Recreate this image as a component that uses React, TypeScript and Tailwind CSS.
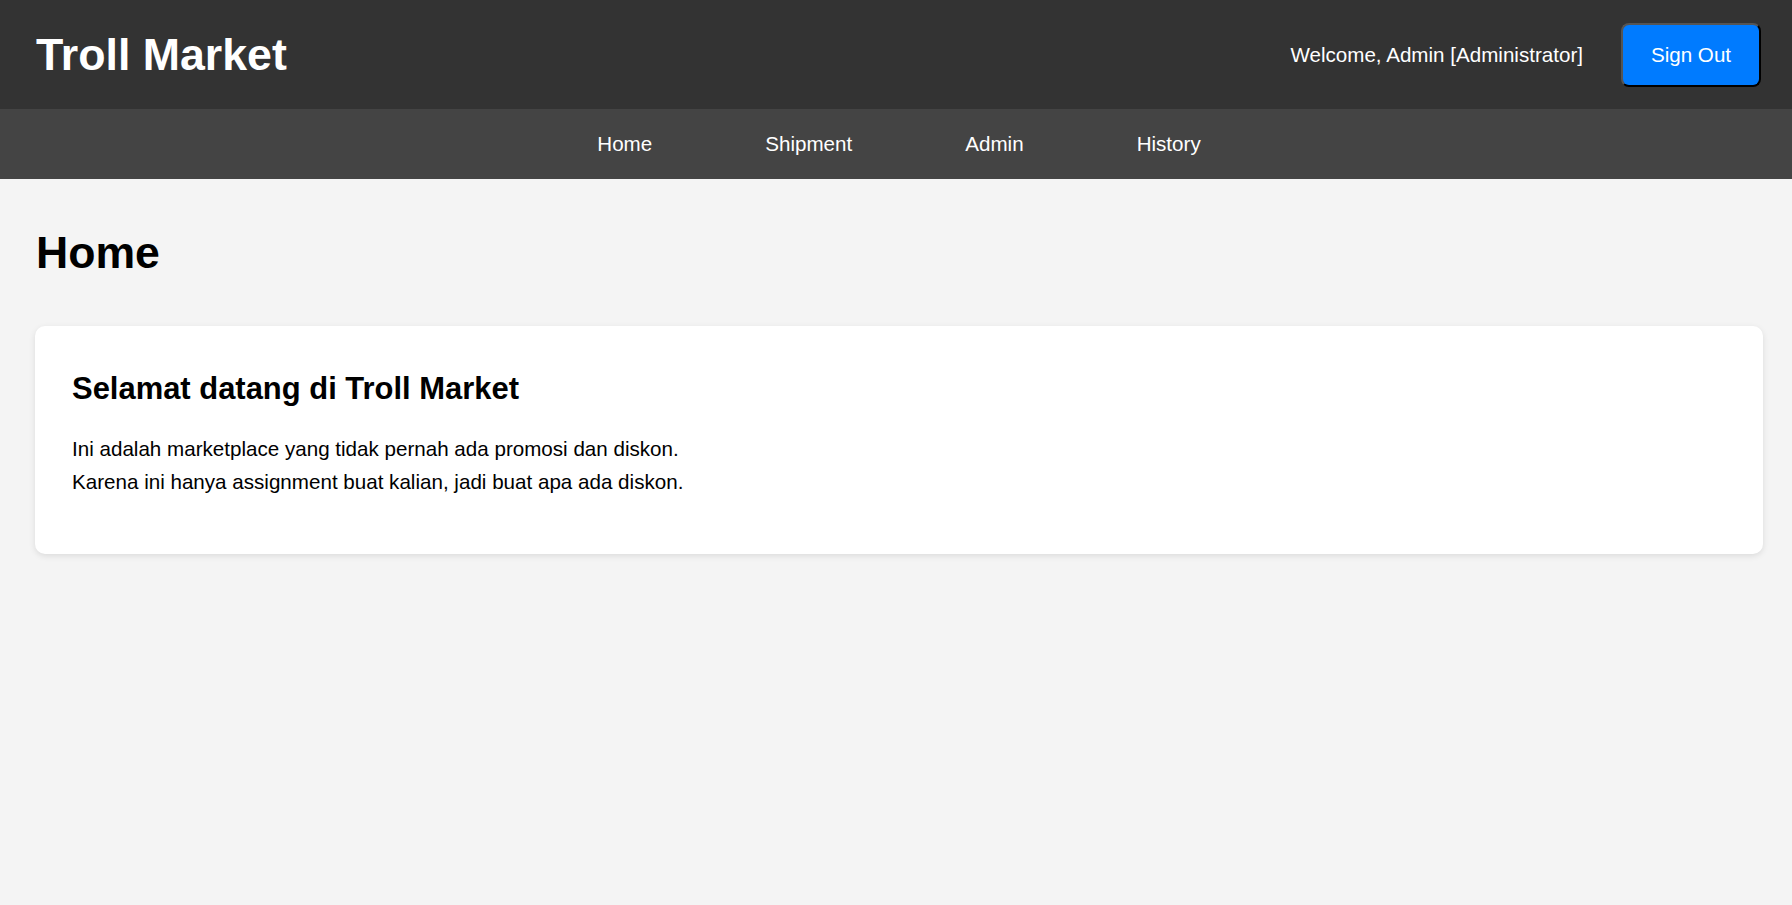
import React from "react";

export default function App() {
  const nav = ["Home", "Shipment", "Admin", "History"];
  return (
    <div
      className="min-h-[905px] bg-[#f4f4f4] text-black"
      style={{ fontFamily: '"Liberation Sans", Arial, sans-serif' }}
    >
      <header className="h-[109px] bg-[#333333] flex items-center justify-between pl-[36px] pr-[31px]">
        <h1 className="text-[44.7px] leading-[50px] font-bold text-white">Troll Market</h1>
        <div className="flex items-center gap-[38px]">
          <span className="text-[20.6px] leading-[24px] text-white">Welcome, Admin [Administrator]</span>
          <button className="w-[140px] h-[64px] rounded-[8px] bg-[#007bff] text-white text-[20.6px] leading-[24px] border-2 border-t-[#555555] border-l-[#555555] border-b-black border-r-black">
            Sign Out
          </button>
        </div>
      </header>
      <nav className="h-[70px] bg-[#444444] flex items-center justify-center gap-[113px] pl-[6px]">
        {nav.map((n) => (
          <a key={n} className="text-white text-[20.6px] leading-[24px] cursor-pointer">
            {n}
          </a>
        ))}
      </nav>
      <main className="pt-[49px] pl-[35px] pr-[29px]">
        <h1 className="text-[44.6px] leading-[50px] font-bold pl-[1px]">Home</h1>
        <section className="mt-[48px] bg-white rounded-[10px] shadow-[0_2px_6px_rgba(0,0,0,0.1)] pt-[45px] pb-[56px] px-[37px]">
          <h2 className="text-[30.95px] leading-[36px] font-bold">Selamat datang di Troll Market</h2>
          <p className="mt-[25px] text-[20.6px] leading-[33px]">
            Ini adalah marketplace yang tidak pernah ada promosi dan diskon.
            <br />
            Karena ini hanya assignment buat kalian, jadi buat apa ada diskon.
          </p>
        </section>
      </main>
    </div>
  );
}
